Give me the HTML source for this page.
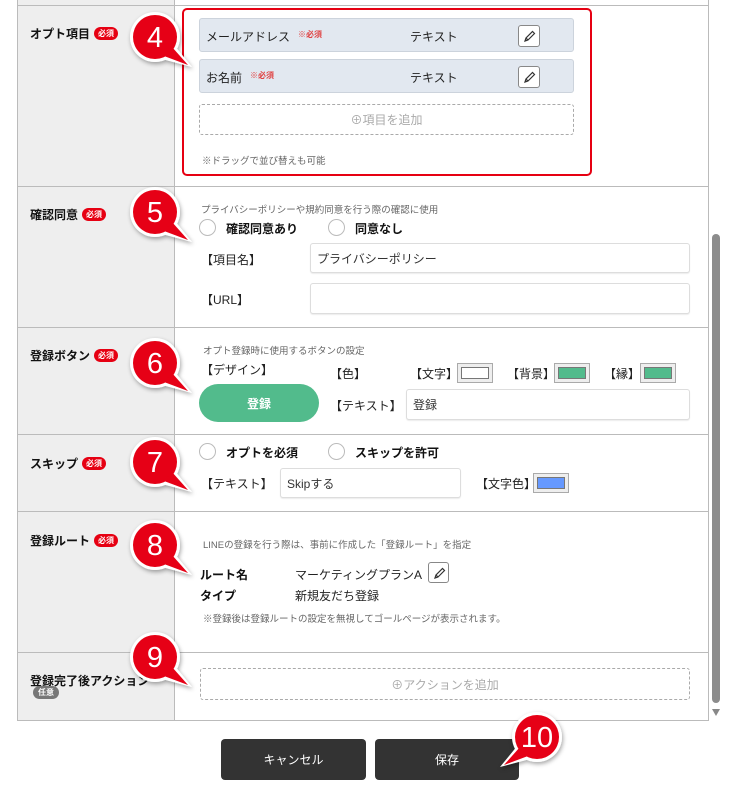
<!DOCTYPE html>
<html><head><meta charset="utf-8"><style>
*{margin:0;padding:0;box-sizing:border-box}
body{width:737px;height:797px;background:#fff;position:relative;overflow:hidden;font-family:"Liberation Sans","Noto Sans CJK JP",sans-serif;color:#222;font-size:12px}
.a{position:absolute;white-space:nowrap}
.lbl{font-weight:bold;font-size:12px;color:#111}
.bd{display:inline-block;background:#e60012;color:#fff;font-size:8px;font-weight:bold;border-radius:7px;padding:1px 4px;margin-left:4px;vertical-align:2px;line-height:11px}
.hint{font-size:9.5px;color:#666}
.inp{position:absolute;border:1px solid #ddd;border-radius:3px;background:#fff;box-shadow:0 1px 1px rgba(0,0,0,.08);font-size:12px;padding-left:6px;display:flex;align-items:center;color:#333}
.item{position:absolute;left:199px;width:375px;height:34px;background:#e2e8f0;border:1px solid #ccd3dc;border-radius:3px}
.eb{position:absolute;width:22px;height:22px;border:1px solid #888;border-radius:3px;background:#fff}
.eb svg{position:absolute;left:4px;top:4px}
.dash{position:absolute;border:1px dashed #aaa;border-radius:3px;color:#aaa;font-size:12px;display:flex;align-items:center;justify-content:center}
.radio{position:absolute;width:17px;height:17px;border:1px solid #bbb;border-radius:50%;background:#fff}
.sw{position:absolute;width:36px;height:20px;border:1px solid #aaa;background:#eee;padding:3px}
.sw div{width:100%;height:100%;border:1px solid #777}
.hl{position:absolute;left:17px;width:692px;height:1px;background:#bbb}
.btn{position:absolute;top:739px;height:41px;background:#333;color:#fff;border-radius:4px;display:flex;align-items:center;justify-content:center;font-size:12px}
</style></head><body>
<div class="a" style="left:17px;top:0;width:158px;height:720px;background:#eee"></div>
<div class="a" style="left:17px;top:0;width:1px;height:720px;background:#bbb"></div>
<div class="a" style="left:174px;top:0;width:1px;height:720px;background:#bbb"></div>
<div class="a" style="left:708px;top:0;width:1px;height:720px;background:#bbb"></div>
<div class="hl" style="top:5px"></div>
<div class="hl" style="top:186px"></div>
<div class="hl" style="top:327px"></div>
<div class="hl" style="top:434px"></div>
<div class="hl" style="top:511px"></div>
<div class="hl" style="top:652px"></div>
<div class="hl" style="top:720px"></div>
<div class="a" style="left:712px;top:234px;width:8px;height:469px;background:#8c8c8c;border-radius:4px"></div>
<div class="a" style="left:712px;top:709px;width:0;height:0;border-left:4px solid transparent;border-right:4px solid transparent;border-top:7px solid #888"></div>

<div class="a lbl" style="left:30px;top:25px">オプト項目<span class="bd">必須</span></div>
<div class="a" style="left:182px;top:8px;width:410px;height:168px;border:2px solid #e60012;border-radius:5px"></div>
<div class="item" style="top:18px"></div>
<div class="a" style="left:206px;top:28px">メールアドレス</div>
<div class="a" style="left:298px;top:29px;font-size:8px;color:#e04040;font-weight:bold">※必須</div>
<div class="a" style="left:410px;top:28px">テキスト</div>
<div class="eb" style="left:518px;top:25px"><svg width="13" height="13" viewBox="0 0 13 13"><path d="M2 11 L3 8 L9.5 1.5 L11.5 3.5 L5 10 Z M3 8 L5 10" fill="none" stroke="#333" stroke-width="1.2"/></svg></div>
<div class="item" style="top:59px"></div>
<div class="a" style="left:206px;top:69px">お名前</div>
<div class="a" style="left:250px;top:70px;font-size:8px;color:#e04040;font-weight:bold">※必須</div>
<div class="a" style="left:410px;top:69px">テキスト</div>
<div class="eb" style="left:518px;top:66px"><svg width="13" height="13" viewBox="0 0 13 13"><path d="M2 11 L3 8 L9.5 1.5 L11.5 3.5 L5 10 Z M3 8 L5 10" fill="none" stroke="#333" stroke-width="1.2"/></svg></div>
<div class="dash" style="left:199px;top:104px;width:375px;height:31px">⊕項目を追加</div>
<div class="a hint" style="left:202px;top:153px">※ドラッグで並び替えも可能</div>

<div class="a lbl" style="left:30px;top:206px">確認同意<span class="bd">必須</span></div>
<div class="a hint" style="left:201px;top:202px">プライバシーポリシーや規約同意を行う際の確認に使用</div>
<div class="radio" style="left:199px;top:219px"></div>
<div class="a lbl" style="left:226px;top:220px">確認同意あり</div>
<div class="radio" style="left:328px;top:219px"></div>
<div class="a lbl" style="left:355px;top:220px">同意なし</div>
<div class="a" style="left:201px;top:251px">【項目名】</div>
<div class="inp" style="left:310px;top:243px;width:380px;height:30px">プライバシーポリシー</div>
<div class="a" style="left:201px;top:291px">【URL】</div>
<div class="inp" style="left:310px;top:283px;width:380px;height:31px"></div>

<div class="a lbl" style="left:30px;top:347px">登録ボタン<span class="bd">必須</span></div>
<div class="a hint" style="left:203px;top:343px">オプト登録時に使用するボタンの設定</div>
<div class="a" style="left:201px;top:361px">【デザイン】</div>
<div class="a" style="left:330px;top:365px">【色】</div>
<div class="a" style="left:410px;top:365px">【文字】</div>
<div class="sw" style="left:457px;top:363px"><div style="background:#fff"></div></div>
<div class="a" style="left:507px;top:365px">【背景】</div>
<div class="sw" style="left:554px;top:363px"><div style="background:#52bb8c"></div></div>
<div class="a" style="left:604px;top:365px">【縁】</div>
<div class="sw" style="left:640px;top:363px"><div style="background:#52bb8c"></div></div>
<div class="a" style="left:199px;top:384px;width:120px;height:38px;background:#52bb8c;border-radius:19px;color:#fff;font-weight:bold;font-size:12px;display:flex;align-items:center;justify-content:center">登録</div>
<div class="a" style="left:330px;top:397px">【テキスト】</div>
<div class="inp" style="left:406px;top:389px;width:284px;height:31px">登録</div>

<div class="a lbl" style="left:30px;top:455px">スキップ<span class="bd">必須</span></div>
<div class="radio" style="left:199px;top:443px"></div>
<div class="a lbl" style="left:226px;top:444px">オプトを必須</div>
<div class="radio" style="left:328px;top:443px"></div>
<div class="a lbl" style="left:355px;top:444px">スキップを許可</div>
<div class="a" style="left:201px;top:475px">【テキスト】</div>
<div class="inp" style="left:280px;top:468px;width:181px;height:30px">Skipする</div>
<div class="a" style="left:476px;top:475px">【文字色】</div>
<div class="sw" style="left:533px;top:473px"><div style="background:#6699ff"></div></div>

<div class="a lbl" style="left:30px;top:532px">登録ルート<span class="bd">必須</span></div>
<div class="a hint" style="left:203px;top:537px">LINEの登録を行う際は、事前に作成した「登録ルート」を指定</div>
<div class="a lbl" style="left:200px;top:566px">ルート名</div>
<div class="a" style="left:295px;top:566px">マーケティングプランA</div>
<div class="eb" style="left:428px;top:562px;width:21px;height:21px"><svg width="13" height="13" viewBox="0 0 13 13"><path d="M2 11 L3 8 L9.5 1.5 L11.5 3.5 L5 10 Z M3 8 L5 10" fill="none" stroke="#333" stroke-width="1.2"/></svg></div>
<div class="a lbl" style="left:200px;top:587px">タイプ</div>
<div class="a" style="left:295px;top:587px">新規友だち登録</div>
<div class="a hint" style="left:203px;top:611px">※登録後は登録ルートの設定を無視してゴールページが表示されます。</div>

<div class="a lbl" style="left:30px;top:672px">登録完了後アクション</div>
<div class="a" style="left:33px;top:686px;background:#777;color:#fff;font-size:8px;font-weight:bold;border-radius:7px;padding:1px 5px;line-height:11px">任意</div>
<div class="dash" style="left:200px;top:668px;width:490px;height:32px">⊕アクションを追加</div>

<div class="btn" style="left:221px;width:145px">キャンセル</div>
<div class="btn" style="left:375px;width:144px">保存</div>

<svg class="a" style="left:0;top:0" width="737" height="797">
<defs>
<filter id="sh" x="-50%" y="-50%" width="200%" height="200%"><feDropShadow dx="1" dy="2" stdDeviation="2" flood-color="#000" flood-opacity="0.35"/></filter>
<g id="c">
<circle r="25" fill="#fff"/><polygon points="19,8 7,22 37,30" fill="#fff"/>
<circle r="22" fill="#e60012"/><polygon points="17,10 9,19 33,28" fill="#e60012"/>
</g>
</defs>
<g filter="url(#sh)">
<use href="#c" x="155" y="37"/>
<use href="#c" x="155" y="212"/>
<use href="#c" x="155" y="363"/>
<use href="#c" x="155" y="462"/>
<use href="#c" x="155" y="545"/>
<use href="#c" x="155" y="657"/>
<use href="#c" transform="translate(537,737) scale(-1,1)"/>
</g>
<g fill="#fff" font-family="Liberation Sans, sans-serif" font-size="29" text-anchor="middle">
<text x="155" y="47">4</text>
<text x="155" y="222">5</text>
<text x="155" y="373">6</text>
<text x="155" y="472">7</text>
<text x="155" y="555">8</text>
<text x="155" y="667">9</text>
<text x="537" y="747">10</text>
</g>
</svg>
</body></html>
